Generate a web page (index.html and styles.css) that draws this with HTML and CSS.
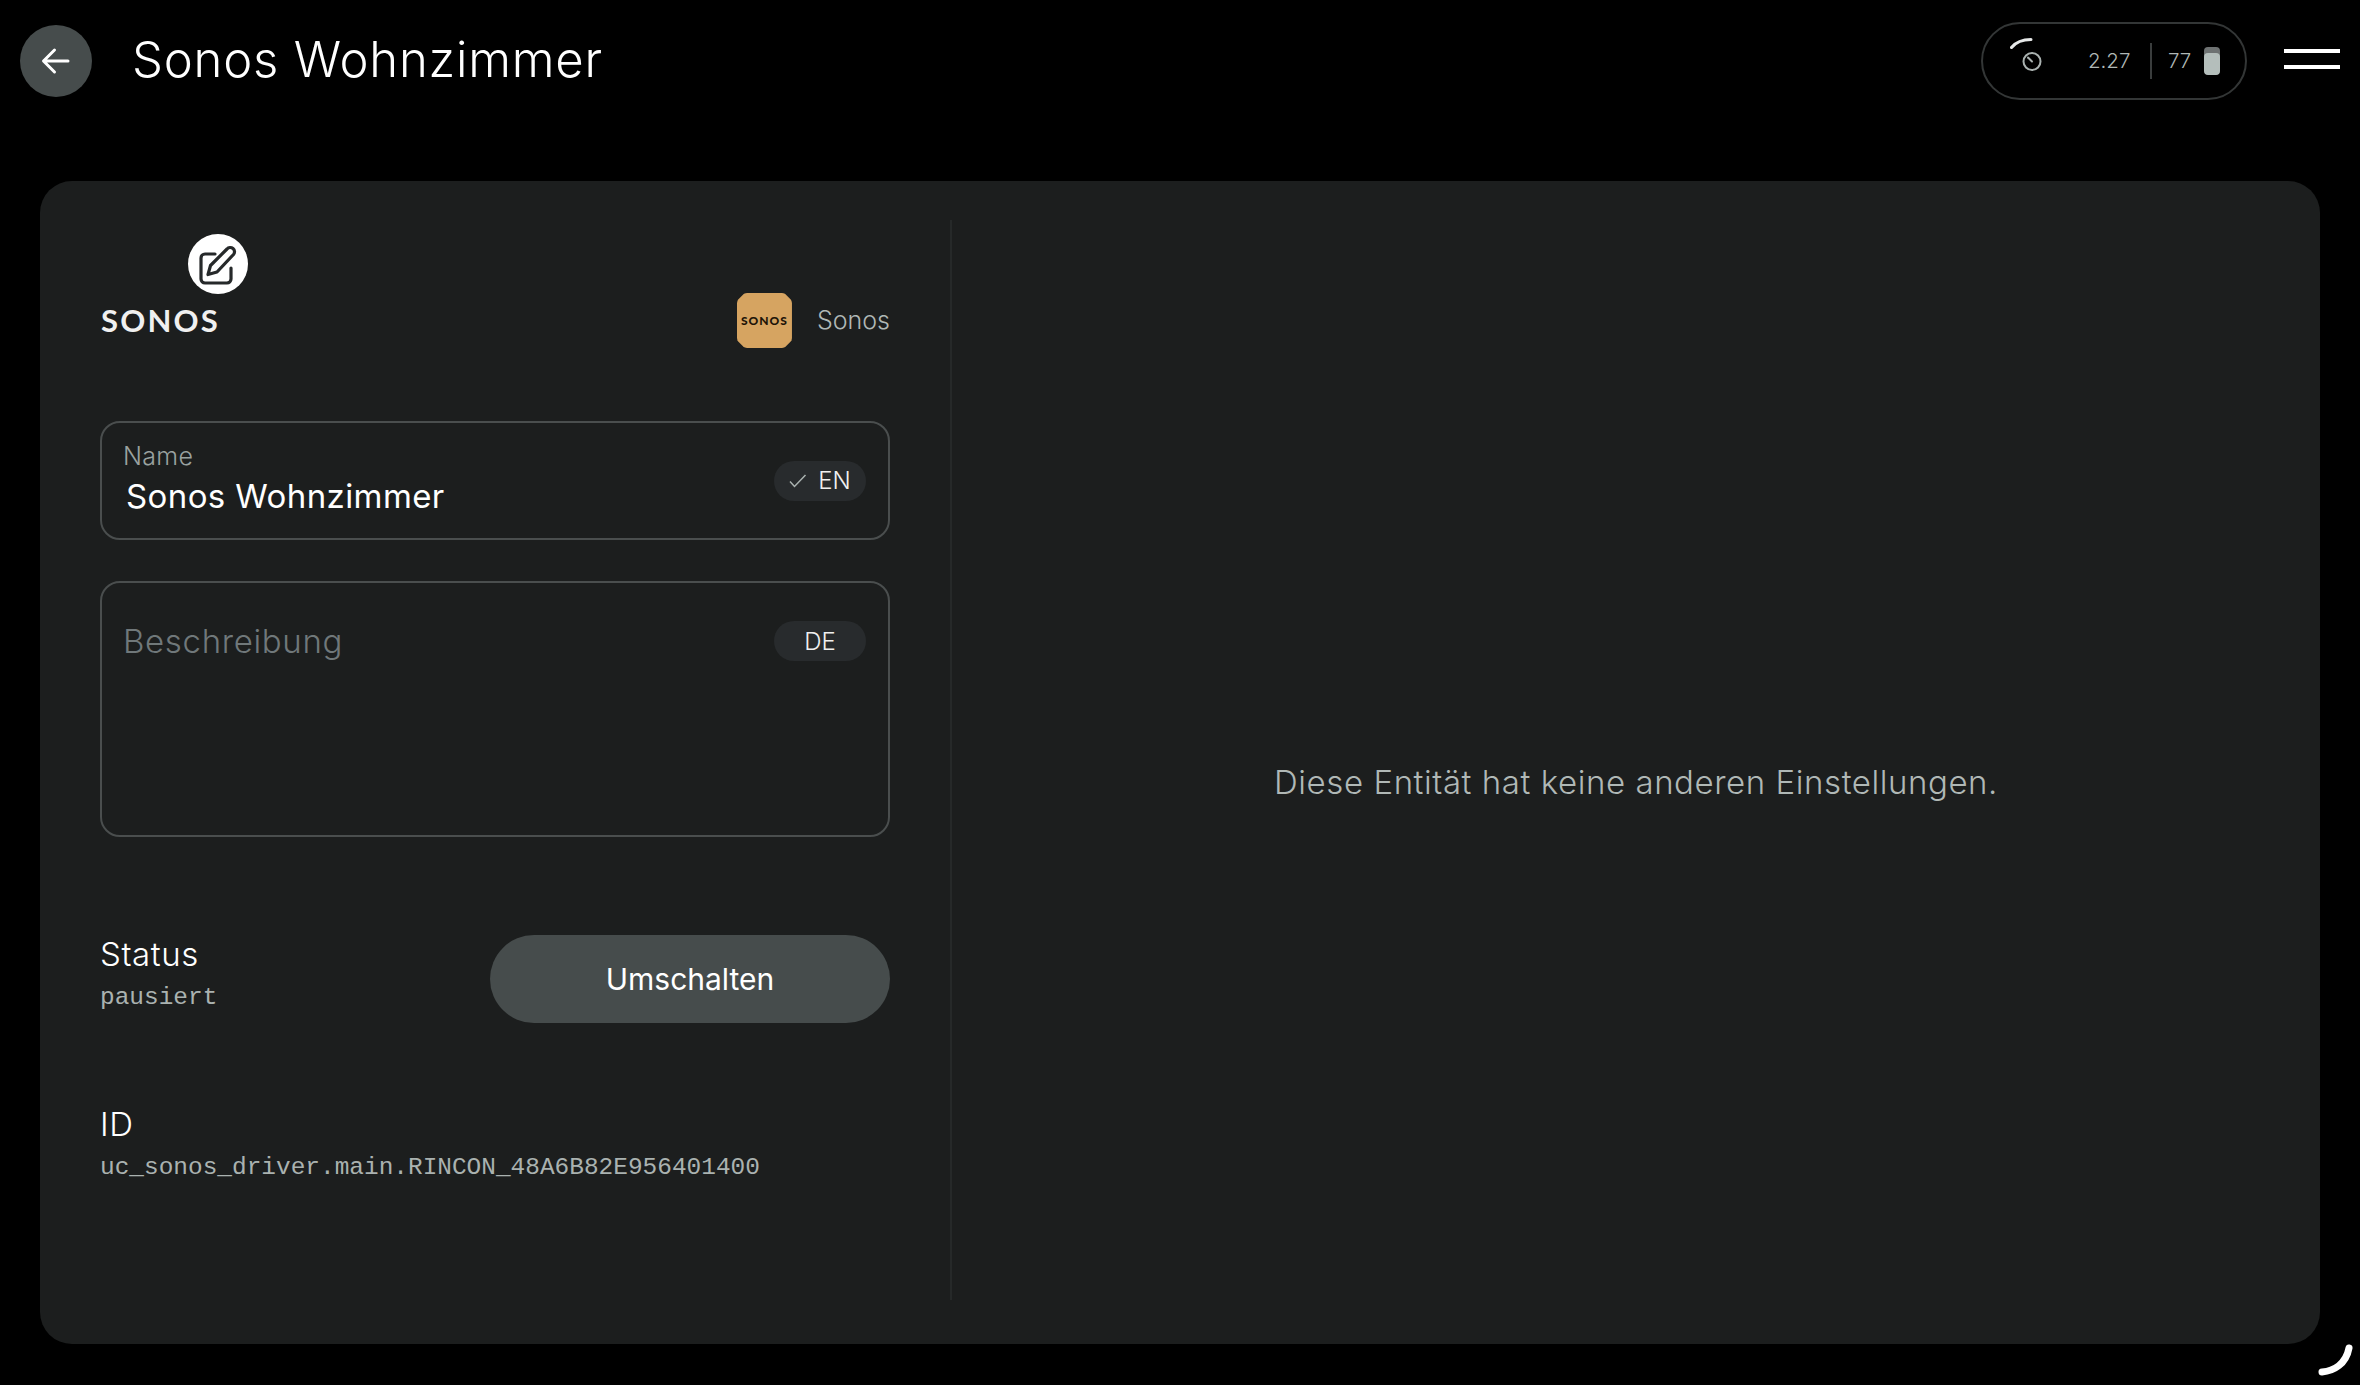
FILE: index.html
```html
<!DOCTYPE html>
<html lang="de">
<head>
<meta charset="utf-8">
<title>Sonos Wohnzimmer</title>
<link rel="stylesheet" href="styles.css">
</head>
<body>
<div class="page">
  <header class="topbar">
    <div class="back">
      <svg class="back-icon" viewBox="0 0 72 72" width="72" height="72"><path d="M48 36H24M34.500 25 23.500 36l11 11"/></svg>
    </div>
    <h1 class="title">Sonos Wohnzimmer</h1>
    <div class="status-pill">
      <svg class="timer" viewBox="0 0 40 48" width="40" height="48"><path class="timer-arc" d="M1.500 12.500C6 7 13 4.500 21 4.500"/><circle class="timer-dial" cx="22" cy="26.500" r="8.500"/><path class="timer-dial" d="M22 26.500 18 22.500"/></svg>
      <span class="stat stat-version">2.27</span>
      <span class="sep"></span>
      <span class="stat">77</span>
      <span class="battery"><span class="battery-fill"></span></span>
    </div>
    <div class="menu"><span class="menu-line"></span><span class="menu-line"></span></div>
  </header>
  <main class="card">
    <section class="left">
      <div class="brand-row">
        <div class="logo">
          <span class="logo-text">SONOS</span>
          <span class="edit-badge">
            <svg class="edit-icon" viewBox="0 0 60 60" width="60" height="60"><path d="M27 20H17a4 4 0 0 0-4 4v21a4 4 0 0 0 4 4h22a4 4 0 0 0 4-4V34"/><path d="M20 40.500l2.500-9L39 15a3.800 3.800 0 0 1 6.500 5.500L29 38z"/></svg>
          </span>
        </div>
        <div class="integration">
          <span class="int-icon"><span class="int-icon-text">SONOS</span></span>
          <span class="int-name">Sonos</span>
        </div>
      </div>
      <div class="field field-name">
        <div class="field-stack">
          <div class="field-label">Name</div>
          <div class="field-value">Sonos Wohnzimmer</div>
        </div>
        <span class="lang">
          <svg class="check" viewBox="0 0 18 14" width="18" height="14"><path d="M1 7.500 5.500 12.500 16.500 1"/></svg>EN
        </span>
      </div>
      <div class="field field-desc">
        <div class="placeholder">Beschreibung</div>
        <span class="lang">DE</span>
      </div>
      <div class="status-row">
        <div class="status-text">
          <div class="item-title">Status</div>
          <div class="item-mono item-mono-status">pausiert</div>
        </div>
        <div class="btn">Umschalten</div>
      </div>
      <div class="id-block">
        <div class="item-title">ID</div>
        <div class="item-mono">uc_sonos_driver.main.RINCON_48A6B82E956401400</div>
      </div>
    </section>
    <section class="right">
      <p class="empty">Diese Entität hat keine anderen Einstellungen.</p>
    </section>
  </main>
  <svg class="resize-arc" viewBox="0 0 40 36" width="40" height="36"><path d="M4 28C16 27 28 20 31 4"/></svg>
</div>
</body>
</html>
```

FILE: styles.css
```css
* { box-sizing: border-box; }
html, body { margin: 0; padding: 0; background: #000; }
body { font-family: Inter, "Noto Sans", sans-serif; color: #fff; }

.page { position: relative; width: 2360px; height: 1385px; overflow: hidden; background: #000; display: flex; flex-direction: column; }

.topbar { display: flex; align-items: center; height: 122px; padding: 0 20px; flex: none; margin-bottom: 59px; }
.back { width: 72px; height: 72px; border-radius: 50%; background: #464c4c; flex: none; }
.back-icon { display: block; fill: none; stroke: #fff; stroke-width: 3; stroke-linecap: round; stroke-linejoin: round; }
.title { margin: -2px 0 0 40px; font-size: 49px; font-weight: 300; line-height: 60px; flex: 1; letter-spacing: 0.800px; }

.status-pill { display: flex; align-items: center; width: 266px; height: 78px; border: 2px solid #333636; border-radius: 39px; padding: 0 0 0 27px; color: #b0b8b6; }
.timer { flex: none; margin-top: -4px; }
.timer-arc { fill: none; stroke: #e6e8e8; stroke-width: 3; stroke-linecap: round; }
.timer-dial { fill: none; stroke: #aab2b0; stroke-width: 2; stroke-linecap: round; }
.stat { font-size: 20.500px; font-weight: 300; line-height: 30px; }
.stat-version { margin-left: 38px; width: 41px; }
.sep { width: 2px; height: 36px; background: #3a3d3d; margin: 0 16px 0 21px; }
.battery { position: relative; width: 16px; height: 28px; margin-left: 13px; border-radius: 4px; background: #6e7272; overflow: hidden; }
.battery-fill { position: absolute; left: 0; right: 0; bottom: 0; height: 22px; border-radius: 4px; background: #b4bebb; }

.menu { display: flex; flex-direction: column; gap: 12px; width: 56px; margin-left: 37px; margin-right: 0; margin-top: -5px; }
.menu-line { display: block; height: 4px; background: #fff; }

.card { flex: none; display: flex; width: 2280px; height: 1163px; margin-left: 40px; padding: 39px 0 44px; background: #1c1e1e; border-radius: 32px; }

.left { flex: none; width: 912px; padding: 72px 60px 0 60px; border-right: 2px solid #262929; }
.right { flex: 1; display: flex; align-items: center; justify-content: center; padding-top: 44px; }
.empty { margin: 0; font-size: 33px; font-weight: 300; color: #b0b8b6; line-height: 44px; letter-spacing: 0.560px; }

.brand-row { display: flex; justify-content: space-between; align-items: center; height: 56px; }
.logo { position: relative; }
.logo-text { display: block; font-family: Lato, sans-serif; font-size: 31px; font-weight: 700; letter-spacing: 2.200px; line-height: 30px; color: #f0f0f0; margin-left: 1px; }
.edit-badge { position: absolute; left: 88px; top: -71px; width: 60px; height: 60px; border-radius: 50%; background: #fff; }
.edit-icon { display: block; fill: none; stroke: #26292a; stroke-width: 3.200; stroke-linejoin: round; stroke-linecap: round; }
.integration { display: flex; align-items: center; gap: 25px; }
.int-icon { width: 55px; height: 55px; margin-top: 1px; background: #d6a461; clip-path: polygon(14% 0, 86% 0, 100% 14%, 100% 86%, 86% 100%, 14% 100%, 0 86%, 0 14%); border-radius: 10px; display: flex; align-items: center; justify-content: center; }
.int-icon-text { font-family: Lato, sans-serif; font-size: 12px; font-weight: 900; letter-spacing: 1px; color: #1e1408; }
.int-name { font-size: 25px; font-weight: 300; color: #b0b8b6; line-height: 32px; }

.field { display: flex; justify-content: space-between; border: 2px solid #4a4e4e; border-radius: 20px; padding-left: 21px; padding-right: 22px; }
.field-name { height: 119px; margin-top: 73px; align-items: center; }
.field-desc { height: 256px; margin-top: 41px; padding-top: 38px; align-items: flex-start; }
.field-stack { margin-top: 1px; }
.field-label { font-size: 25px; font-weight: 300; color: #9aa2a0; line-height: 28px; letter-spacing: 0.300px; margin-top: -2px; }
.field-value { font-size: 33px; font-weight: 400; line-height: 46px; margin-left: 3px; margin-top: 3px; letter-spacing: 0.400px; }
.placeholder { font-size: 33px; font-weight: 300; color: #70787a; line-height: 40px; letter-spacing: 0.650px; }
.lang { display: flex; align-items: center; justify-content: center; gap: 11px; width: 92px; height: 40px; border-radius: 20px; background: #282b2d; font-size: 24px; font-weight: 300; color: #f0f0f0; flex: none; }
.check { fill: none; stroke: #aab2b0; stroke-width: 1.500; }

.status-row { display: flex; justify-content: space-between; align-items: center; margin-top: 98px; height: 88px; }
.status-text { margin-bottom: 10px; }
.item-title { font-size: 33px; font-weight: 300; line-height: 40px; letter-spacing: 0.600px; }
.item-mono { font-family: "Liberation Mono", monospace; font-size: 24.450px; color: #aab2b0; line-height: 32px; margin-top: 8px; }
.btn { width: 400px; height: 88px; border-radius: 44px; background: #464c4c; display: flex; align-items: center; justify-content: center; font-size: 30px; font-weight: 400; }
.id-block { margin-top: 81px; }

.resize-arc { position: absolute; left: 2318px; top: 1344px; fill: none; stroke: #fff; stroke-width: 7; stroke-linecap: round; }
```
